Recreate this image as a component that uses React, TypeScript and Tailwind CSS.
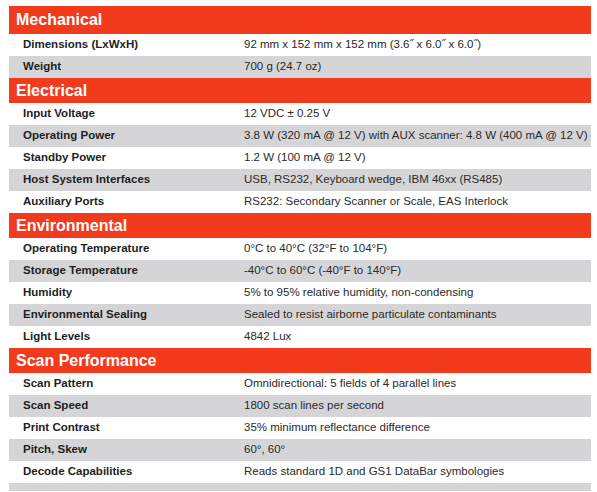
import React from "react";

type Section = { title: string; rows: [string, string][]; first?: boolean };

const sections: Section[] = [
  {
    title: "Mechanical",
    first: true,
    rows: [
      ["Dimensions (LxWxH)", "92 mm x 152 mm x 152 mm (3.6˝ x 6.0˝ x 6.0˝)"],
      ["Weight", "700 g (24.7 oz)"],
    ],
  },
  {
    title: "Electrical",
    rows: [
      ["Input Voltage", "12 VDC ± 0.25 V"],
      ["Operating Power", "3.8 W (320 mA @ 12 V) with AUX scanner: 4.8 W (400 mA @ 12 V)"],
      ["Standby Power", "1.2 W (100 mA @ 12 V)"],
      ["Host System Interfaces", "USB, RS232, Keyboard wedge, IBM 46xx (RS485)"],
      ["Auxiliary Ports", "RS232: Secondary Scanner or Scale, EAS Interlock"],
    ],
  },
  {
    title: "Environmental",
    rows: [
      ["Operating Temperature", "0°C to 40°C (32°F to 104°F)"],
      ["Storage Temperature", "-40°C to 60°C (-40°F to 140°F)"],
      ["Humidity", "5% to 95% relative humidity, non-condensing"],
      ["Environmental Sealing", "Sealed to resist airborne particulate contaminants"],
      ["Light Levels", "4842 Lux"],
    ],
  },
  {
    title: "Scan Performance",
    rows: [
      ["Scan Pattern", "Omnidirectional: 5 fields of 4 parallel lines"],
      ["Scan Speed", "1800 scan lines per second"],
      ["Print Contrast", "35% minimum reflectance difference"],
      ["Pitch, Skew", "60°, 60°"],
      ["Decode Capabilities", "Reads standard 1D and GS1 DataBar symbologies"],
    ],
  },
];

export default function App() {
  return (
    <div
      className="w-[597px] h-[492px] overflow-hidden bg-white pt-[6px] pl-[9px]"
      style={{ fontFamily: '"Liberation Sans", Arial, sans-serif' }}
    >
      <div className="w-[582px] flex flex-col">
        {sections.map((s) => (
          <div key={s.title} className="flex flex-col">
            <div
              className={`bg-[#f23a1d] text-white font-bold text-[16px] pl-[7px] flex items-center ${
                s.first ? "h-[28px]" : "h-[25px]"
              }`}
            >
              {s.title}
            </div>
            {s.rows.map(([k, v], i) => (
              <div
                key={k}
                className={`h-[22px] flex items-center text-[11.5px] whitespace-nowrap ${
                  i % 2 === 1 ? "bg-[#d5d5d7]" : "bg-white"
                }`}
              >
                <div className="w-[235px] pl-[14px] font-bold text-[#1e1e1e] shrink-0">{k}</div>
                <div className="text-[#2a2a2a]">{v}</div>
              </div>
            ))}
          </div>
        ))}
        <div className="h-[8px] bg-[#d5d5d7]" />
      </div>
    </div>
  );
}
